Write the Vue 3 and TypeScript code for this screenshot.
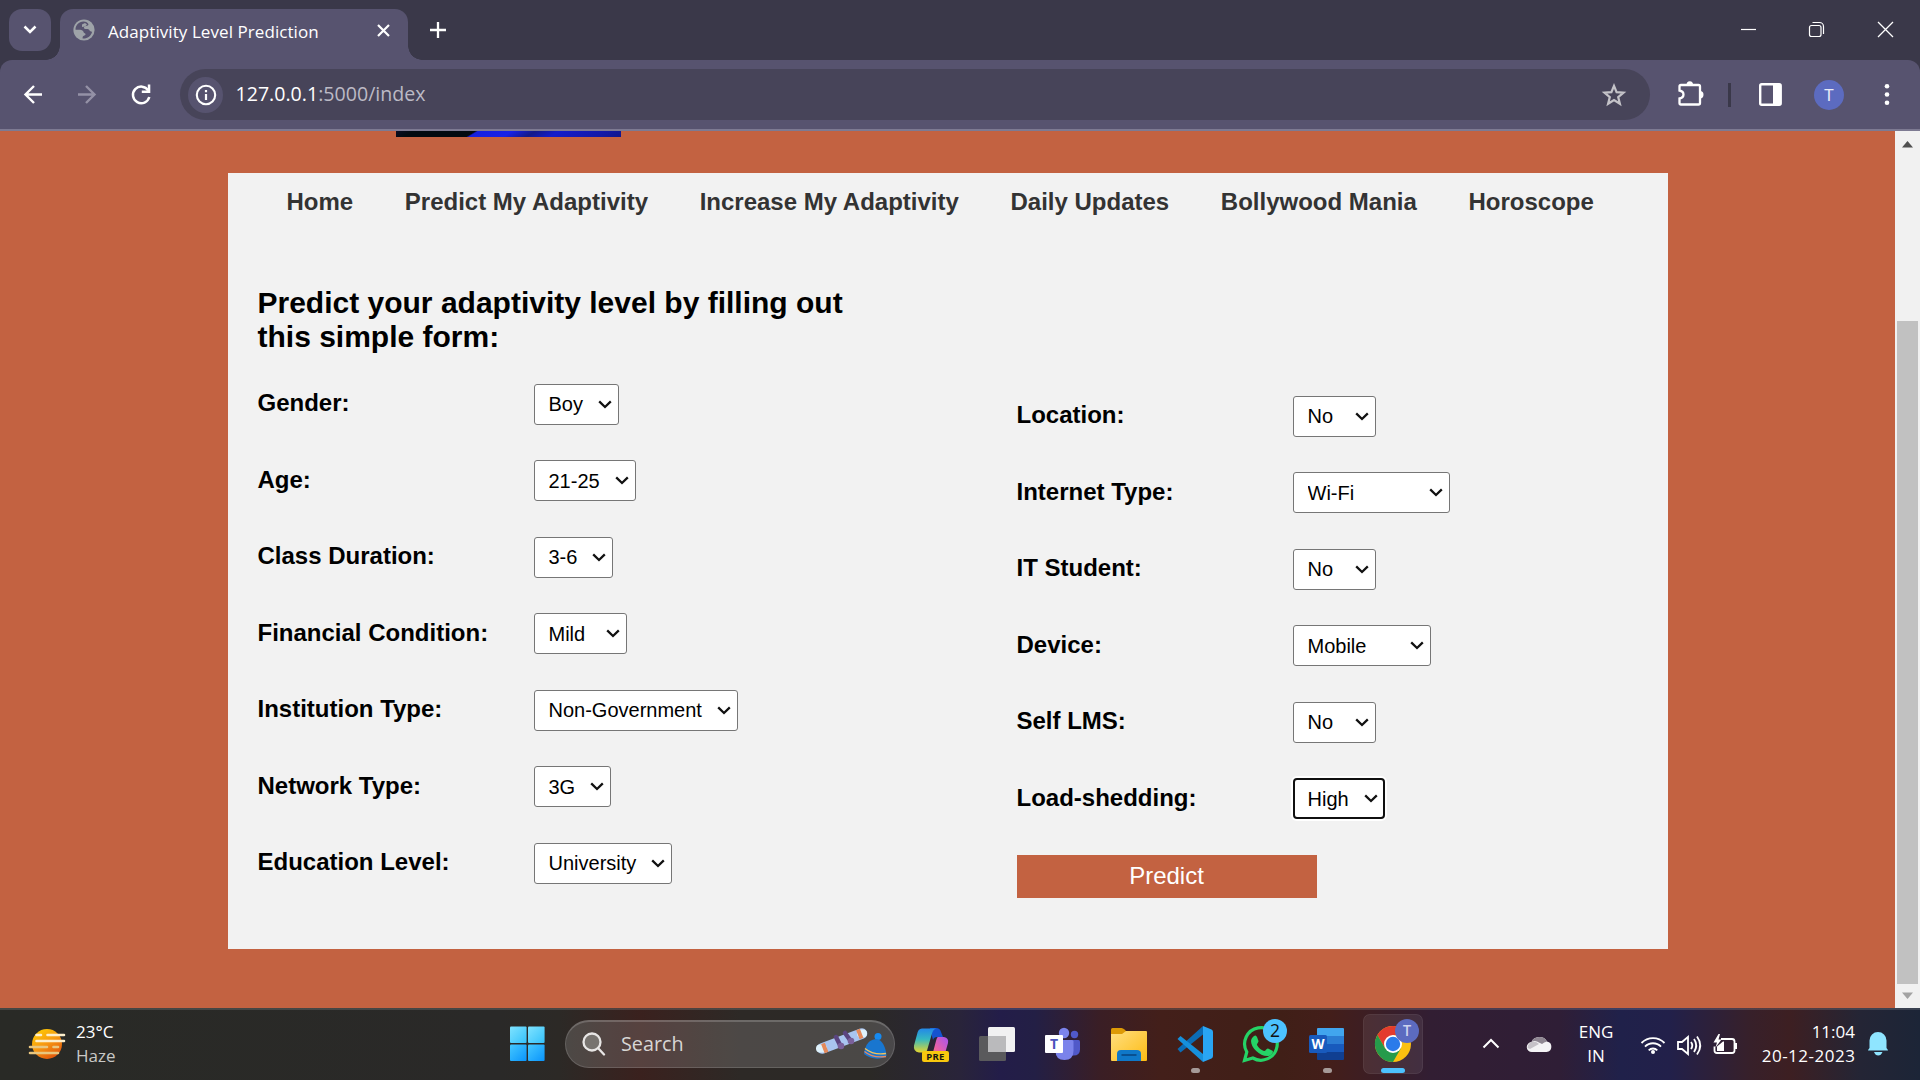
<script setup lang="ts">
interface Field {
  label: string
  value: string
  width: number
  focused?: boolean
}

const navLinks: string[] = [
  'Home',
  'Predict My Adaptivity',
  'Increase My Adaptivity',
  'Daily Updates',
  'Bollywood Mania',
  'Horoscope',
]

const leftFields: Field[] = [
  { label: 'Gender:', value: 'Boy', width: 85 },
  { label: 'Age:', value: '21-25', width: 102 },
  { label: 'Class Duration:', value: '3-6', width: 79 },
  { label: 'Financial Condition:', value: 'Mild', width: 93 },
  { label: 'Institution Type:', value: 'Non-Government', width: 204 },
  { label: 'Network Type:', value: '3G', width: 77 },
  { label: 'Education Level:', value: 'University', width: 138 },
]

const rightFields: Field[] = [
  { label: 'Location:', value: 'No', width: 83 },
  { label: 'Internet Type:', value: 'Wi-Fi', width: 157 },
  { label: 'IT Student:', value: 'No', width: 83 },
  { label: 'Device:', value: 'Mobile', width: 138 },
  { label: 'Self LMS:', value: 'No', width: 83 },
  { label: 'Load-shedding:', value: 'High', width: 92, focused: true },
]
</script>

<template>
  <div class="desktop">
    <header class="tabstrip">
      <button class="tab-search" aria-label="Search tabs">
        <svg width="14" height="10" viewBox="0 0 14 10"><path d="M1.500 1.500 7 7l5.500-5.500" fill="none" stroke="#fff" stroke-width="2.500" /></svg>
      </button>
      <div class="tab">
        <svg class="globe" width="22" height="22" viewBox="0 0 22 22">
          <circle cx="11" cy="11" r="10.600" fill="#9ea3a8" />
          <path d="M10.500 2.500c-4.800.2-8 3.800-8 8.200 2 .3 4.600-.2 6.500.6 1.800.8 1.200 2.400 2.700 3 .8.3 1 1.200.6 1.700-1.200 1-2.700.6-2.700 2.400v1.100c4.600.4 8.500-2.400 9.500-6.800-2.600.2-2.300-2.500-4.600-2.700-1.900-.2-2.700.6-3.500-.7-.6-1.300.7-2.200 1.900-2.300 1.500-.1 2.600-.4 2.500-1.900C14.900 3.800 13 2.600 10.500 2.500z" fill="#57536f" />
          <path d="M9 5.500 12 4l2 1.500-2 2-3 .5z" fill="#9ea3a8" />
        </svg>
        <span class="tab-title">Adaptivity Level Prediction</span>
        <svg width="13" height="13" viewBox="0 0 13 13"><path d="m1 1 11 11M12 1 1 12" stroke="#fff" stroke-width="2.200" /></svg>
      </div>
      <svg class="plus" width="16" height="16" viewBox="0 0 16 16"><path d="M8 0v16M0 8h16" stroke="#fff" stroke-width="2.300" /></svg>
      <div class="window-buttons">
        <svg width="69" height="60" viewBox="1714 0 69 60"><path d="M1741 29.500h15" stroke="#fff" stroke-width="1.200" /></svg>
        <svg width="69" height="60" viewBox="1783 0 69 60" fill="none" stroke="#fff" stroke-width="1.200">
          <rect x="1809.500" y="25.500" width="11.500" height="11" rx="2" />
          <path d="M1812.500 22.500h7a4 4 0 0 1 4 4v7.500" />
        </svg>
        <svg width="68" height="60" viewBox="1852 0 68 60"><path d="m1878 22 15 15m0-15-15 15" stroke="#fff" stroke-width="1.300" /></svg>
      </div>
    </header>

    <div class="toolbar-back">
      <div class="toolbar">
        <svg width="180" height="69" viewBox="0 60 180 69" fill="none">
          <path d="M42 94.500H26.500M34 86l-8.500 8.500L34 103" stroke="#fff" stroke-width="2.400" />
          <path d="M78 94.500h15.500M86 86l8.500 8.500L86 103" stroke="#9491a6" stroke-width="2.400" />
          <path d="M148.300 90.500a8.300 8.300 0 1 0 1 6.500" stroke="#fff" stroke-width="2.500" />
          <path d="M150.300 84.500v8.500h-8.500v-2.500h6v-6z" fill="#fff" />
        </svg>
        <div class="omnibox">
          <div class="site-info">
            <svg width="22" height="22" viewBox="0 0 22 22">
              <circle cx="11" cy="11" r="9.200" fill="none" stroke="#fff" stroke-width="2.100" />
              <path d="M11 10v6M11 5.900v2.300" stroke="#fff" stroke-width="2.200" />
            </svg>
          </div>
          <span class="url">127.0.0.1<span class="url-rest">:5000/index</span></span>
          <svg width="26" height="26" viewBox="1601 81 26 26"><path d="m1614 84.800 2.600 6.400 6.900.5-5.300 4.400 1.700 6.700-5.900-3.700-5.900 3.700 1.700-6.700-5.300-4.400 6.900-.5z" fill="none" stroke="#c4c3c8" stroke-width="2.200" /></svg>
        </div>
        <svg class="toolbar-actions" width="270" height="69" viewBox="1650 60 270 69">
          <path d="M1681 85h17.500q1.500 0 1.500 1.500v16.500q0 1.500-1.500 1.500h-17.500q-1.500 0-1.500-1.500v-4.500c5.300-1 5.300-7 0-8v-4q0-1.500 1.500-1.500z" fill="none" stroke="#fff" stroke-width="2.300" />
          <path d="M1686.500 85a3.300 3.800 0 0 1 6.600 0zM1700 91a3.500 3.700 0 0 1 0 7.400z" fill="#fff" />
          <path d="M1729.500 83v24" stroke="#3a3849" stroke-width="3" />
          <rect x="1760.200" y="84.300" width="20.500" height="20.500" rx="1.500" fill="none" stroke="#fff" stroke-width="2.400" />
          <path d="M1773 84h8v21h-8z" fill="#fff" />
          <circle cx="1829" cy="95" r="15" fill="#5c6bc0" />
          <text x="1829" y="101" text-anchor="middle" font-size="16.500" font-family="Roboto, sans-serif" fill="#e9ebf8">T</text>
          <g fill="#fff"><circle cx="1887" cy="86.300" r="2.300" /><circle cx="1887" cy="94.500" r="2.300" /><circle cx="1887" cy="102.800" r="2.300" /></g>
        </svg>
      </div>
    </div>

    <div class="viewport">
      <main class="page">
        <div class="banner"></div>
        <div class="container">
          <nav class="nav">
            <a v-for="link in navLinks" :key="link">{{ link }}</a>
          </nav>
          <form class="form" @submit.prevent>
            <section class="column">
              <h2>Predict your adaptivity level by filling out this simple form:</h2>
              <div v-for="field in leftFields" :key="field.label" class="row">
                <label>{{ field.label }}</label>
                <span class="select" :style="{ width: field.width + 'px' }">
                  <select><option>{{ field.value }}</option></select>
                  <svg width="14" height="9" viewBox="0 0 14 9"><path d="m1.200 1.400 5.800 5.600 5.800-5.600" fill="none" stroke="#111" stroke-width="2.300" /></svg>
                </span>
              </div>
            </section>
            <section class="column right">
              <div v-for="field in rightFields" :key="field.label" class="row">
                <label>{{ field.label }}</label>
                <span class="select" :class="{ focused: field.focused }" :style="{ width: field.width + 'px' }">
                  <select><option>{{ field.value }}</option></select>
                  <svg width="14" height="9" viewBox="0 0 14 9"><path d="m1.200 1.400 5.800 5.600 5.800-5.600" fill="none" stroke="#111" stroke-width="2.300" /></svg>
                </span>
              </div>
              <button class="predict">Predict</button>
            </section>
          </form>
        </div>
      </main>
      <div class="scrollbar">
        <svg width="25" height="25" viewBox="0 0 25 25"><path d="M7 16.500 12.500 10l5.500 6.500z" fill="#505050" /></svg>
        <div class="thumb"></div>
        <svg width="25" height="24" viewBox="0 1 25 24"><path d="M7 9.500h11L12.500 16z" fill="#a3a3a3" /></svg>
      </div>
    </div>

    <footer class="taskbar">
      <div class="weather">
        <svg width="38" height="34" viewBox="28 1026 38 34">
          <defs><linearGradient id="sun" x1="0" y1="0" x2=".6" y2="1"><stop offset="0" stop-color="#ffd400" /><stop offset=".55" stop-color="#f79a12" /><stop offset="1" stop-color="#e35a0c" /></linearGradient></defs>
          <circle cx="47" cy="1043" r="15" fill="url(#sun)" />
          <g stroke-width="2.600" stroke-linecap="round">
            <path d="M36.500 1034h4.500M47.500 1034H64M36.500 1040H64" stroke="#fdeecb" />
            <path d="M30 1046h17M53.500 1046h4.500M30 1052h28" stroke="#e9c67e" />
          </g>
        </svg>
        <div class="weather-text"><span>23°C</span><span class="dim">Haze</span></div>
      </div>
      <svg class="start" width="36" height="36" viewBox="0 0 36 36">
        <defs>
          <linearGradient id="win" x1="0" y1="0" x2="1" y2="1"><stop offset="0" stop-color="#7fe3ff" /><stop offset="1" stop-color="#35c1fb" /></linearGradient>
          <linearGradient id="win2" x1="0" y1="0" x2="1" y2="1"><stop offset="0" stop-color="#45c8ff" /><stop offset="1" stop-color="#0a94fb" /></linearGradient>
        </defs>
        <rect x="0" y="0.500" width="16.600" height="16.600" rx="1" fill="url(#win)" /><rect x="18" y="0.500" width="16.600" height="16.600" rx="1" fill="url(#win)" />
        <rect x="0" y="18.400" width="16.600" height="16.600" rx="1" fill="url(#win2)" /><rect x="18" y="18.400" width="16.600" height="16.600" rx="1" fill="url(#win2)" />
      </svg>
      <div class="search">
        <svg width="24" height="24" viewBox="0 0 24 24" fill="none" stroke="#e8e6e5" stroke-width="2.300"><circle cx="10" cy="10" r="8.500" fill="#77736f" /><path d="m16 16 6 6.500" stroke-linecap="round" /></svg>
        <span>Search</span>
        <svg class="doodle" width="72" height="34" viewBox="815 1029 72 34">
          <path d="M822 1050.500 862 1035.500" stroke="#a9c5f0" stroke-width="10.500" stroke-linecap="round" />
          <path d="M820 1050.500h3M861 1035.500h2" stroke="#dff2fb" stroke-width="8" stroke-linecap="round" />
          <path d="m823 1045.500 3.500 9M858 1031.500l3.500 9" stroke="#e4895a" stroke-width="4" />
          <path d="m836 1039 4 8M845 1035l5 7" stroke="#5b4580" stroke-width="4.500" stroke-linecap="round" />
          <circle cx="841" cy="1048" r="3.300" fill="#7a609a" /><circle cx="851" cy="1043" r="3.300" fill="#7a609a" />
          <circle cx="878" cy="1038.500" r="3.500" fill="#168af0" />
          <path d="M864 1056c1-10 6-15 13-15 5 1 9 8 9.500 17-7 4.500-16 3-22.500-2z" fill="#1976cf" />
          <path d="M865 1050.500c6 5 14 6 21 5" fill="none" stroke="#f2c35c" stroke-width="1.300" />
          <path d="M864.500 1053.500c6 5 14 6 21.500 5" fill="none" stroke="#e78b60" stroke-width="1.300" />
        </svg>
      </div>

      <svg class="app" viewBox="898 1008 66 72">
        <defs>
          <linearGradient id="cpA" x1="0" y1="0" x2="0" y2="1"><stop offset="0" stop-color="#2388e8" /><stop offset=".45" stop-color="#35b8c0" /><stop offset="1" stop-color="#e7d52d" /></linearGradient>
          <linearGradient id="cpB" x1="1" y1="0" x2="0" y2="1"><stop offset="0" stop-color="#a455f0" /><stop offset=".5" stop-color="#e760a8" /><stop offset="1" stop-color="#ff8a50" /></linearGradient>
        </defs>
        <path d="M930 1028h6q4 0 5 4l2 5h-6q-3 0-4 3z" fill="#1553d0" />
        <path d="M922 1028.500h14q-3 1-4 5l-5 17q-1 2-3 2h-5q-6-1-5-7l3-11q1-6 5-6z" fill="url(#cpA)" />
        <path d="M938 1037h6q5 1 4 6l-4 14q-2 4-6 4h-10q3-1 4-5l4-15q1-4 2-4z" fill="url(#cpB)" />
        <rect x="922" y="1051" width="27" height="11" rx="2" fill="#f9c80e" />
        <text x="935.500" y="1060" text-anchor="middle" font-family="Noto Sans, sans-serif" font-weight="700" font-size="9.500" letter-spacing=".4" fill="#1c1a10">PRE</text>
      </svg>
      <svg class="app" viewBox="964 1008 66 72">
        <rect x="979" y="1036" width="27" height="25" rx="1.500" fill="#5a5a5c" />
        <rect x="988" y="1027" width="27" height="25" rx="1.500" fill="#f1f1f2" />
        <rect x="988" y="1036" width="18" height="16" fill="#bababc" />
      </svg>
      <svg class="app" viewBox="1030 1008 66 72">
        <circle cx="1074.500" cy="1034.500" r="3.700" fill="#5059c9" /><circle cx="1064" cy="1033" r="5.200" fill="#7b83eb" />
        <path d="M1068 1040h10.500q1.500 0 1.500 1.500v8q0 6-6.500 6h-5z" fill="#5059c9" />
        <path d="M1056 1040h16q1.500 0 1.500 1.500v9q0 9.500-9 9.500t-9-9z" fill="#7b83eb" />
        <rect x="1045" y="1035" width="18" height="18" rx="1" fill="#fff" />
        <text x="1054" y="1049" text-anchor="middle" font-family="Open Sans, sans-serif" font-weight="700" font-size="14" fill="#4b53bc">T</text>
      </svg>
      <svg class="app" viewBox="1096 1008 66 72">
        <defs><linearGradient id="fold" x1="0" y1="0" x2="1" y2="1"><stop offset="0" stop-color="#ffdf80" /><stop offset="1" stop-color="#fdbb13" /></linearGradient></defs>
        <path d="M1112.500 1028h9q1.500 0 3 1.500l2 2v6H1111v-8q0-1.500 1.500-1.500z" fill="#dd9a06" />
        <path d="M1111 1034h11l4-3h20q1 0 1 1v28q0 1-1 1h-34q-1 0-1-1z" fill="url(#fold)" />
        <path d="M1117 1061v-7q0-4 4-4h16q4 0 4 4v7z" fill="#0f78c8" /><path d="M1121.500 1055h15" stroke="#0a4c8a" stroke-width="1.800" />
      </svg>
      <svg class="app" viewBox="1162 1008 66 72">
        <path d="m1177.500 1049 3 3.500 22.500-18v-8.500z" fill="#0b6cb5" />
        <path d="m1177.500 1039 3-3 22.500 18v8z" fill="#1690dc" />
        <path d="m1203 1026 8.500 3.500q1.500.8 1.500 2.500v24q0 1.700-1.500 2.500L1203 1062z" fill="#29a5f3" />
        <rect x="1191" y="1068" width="9" height="5" rx="2.500" fill="#a69a98" />
      </svg>
      <svg class="app" viewBox="1228 1008 66 72">
        <path d="m1244.500 1060.500 2.300-8.500a16.300 16.300 0 1 1 6 6z" fill="none" stroke="#25d366" stroke-width="3.200" />
        <path d="M1253 1037c2-2 3-2 4 0l1.500 4c.3 1-2 3-1.500 4 1.500 3 4 5 7 6 1.500.5 2.500-3 4-2.500l4.500 2.200c1.500 1-1 5-4 5.300-8 1-17.500-8-17.500-15 0-1.500 1-3 2-4z" fill="#25d366" />
        <circle cx="1275" cy="1031" r="12" fill="#4cc2ff" /><text x="1275" y="1037" text-anchor="middle" font-family="Open Sans, sans-serif" font-size="17.500" fill="#111">2</text>
      </svg>
      <svg class="app" viewBox="1294 1008 66 72">
        <path d="M1317 1036v-7q0-1 1-1h25q1 0 1 1v7z" fill="#41a5ee" /><path d="M1317 1036h27v8h-27z" fill="#2b7cd3" /><path d="M1317 1044h27v8h-27z" fill="#185abd" /><path d="M1317 1052h27v7q0 1-1 1h-25q-1 0-1-1z" fill="#103f91" />
        <rect x="1309" y="1035" width="18" height="18" rx="1.500" fill="#185abd" />
        <text x="1318" y="1049" text-anchor="middle" font-family="Open Sans, sans-serif" font-weight="700" font-size="13.500" fill="#fff">W</text>
        <rect x="1323" y="1068" width="9" height="5" rx="2.500" fill="#a69a98" />
      </svg>
      <svg class="app" viewBox="1360 1008 66 72">
        <rect x="1363.500" y="1014.500" width="59" height="59" rx="6" fill="#ffffff14" stroke="#ffffff18" />
        <circle cx="1393" cy="1044" r="18" fill="#fcc010" />
        <path d="M1393 1035h15.700A18 18 0 0 0 1377.400 1035l7.800 13.500z" fill="#e33b2e" />
        <path d="M1377.400 1035a18 18 0 0 0 15.600 27l7.800-13.500h-15.600z" fill="#259b4b" />
        <circle cx="1393" cy="1044" r="9" fill="#fff" /><circle cx="1393" cy="1044" r="7.200" fill="#2a7bea" />
        <circle cx="1407" cy="1031" r="12" fill="#5c6bc0" /><text x="1407" y="1036" text-anchor="middle" font-family="Roboto, sans-serif" font-weight="500" font-size="14" fill="#cdd2ee">T</text>
        <rect x="1381" y="1068" width="24" height="5" rx="2.500" fill="#4cc2ff" />
      </svg>

      <svg class="tray" width="134" height="72" viewBox="1440 1008 134 72">
        <path d="m1483.500 1047.500 7.500-7.500 7.500 7.500" fill="none" stroke="#fff" stroke-width="2" />
        <path d="M1532 1052a5 5 0 0 1-.5-10 8.500 8 0 0 1 15.500-.5 5.300 5.300 0 0 1-.5 10.500z" fill="#f4f3f5" />
        <path d="M1531.500 1042a8.500 8 0 0 1 15.500-.5q-3 .5-5 2.500l-5-2.500q-3-1-5.500.5z" fill="#8f8792" />
        <path d="M1527.500 1048q.5-6 6-6.500 3.500 0 5.500 2.500l-9 5z" fill="#c6c2c8" />
      </svg>
      <div class="lang"><span>ENG</span><span>IN</span></div>
      <svg class="status" width="104" height="24" viewBox="1639 1030 104 24" fill="none" stroke="#fff" stroke-width="1.800">
        <path d="M1641.500 1041a16 16 0 0 1 23 0M1645 1044.700a11 11 0 0 1 16 0M1648.700 1048.300a6 6 0 0 1 8.600 0" /><circle cx="1653" cy="1050" r="2" fill="#fff" stroke="none" />
        <path d="M1678 1040h4l6-5v17l-6-5h-4zM1691 1040q2.500 3.500 0 7M1694 1037q4.500 6.500 0 13M1697 1034.500q6.500 9 0 18" />
        <path d="M1721 1037h11q2.500 0 2.500 2.500v9q0 2.500-2.500 2.500h-15q-2.500 0-2.500-2.500v-4" />
        <path d="M1717 1049v-4.500l6-5h1v9.500zM1718.500 1032l-5 8.500h3.500l-1.500 5 6-8h-3l1.500-5.500zM1735 1041h2v6h-2z" fill="#fff" stroke="none" />
      </svg>
      <div class="clock"><span>11:04</span><span class="date">20-12-2023</span></div>
      <svg class="bell" width="22" height="26" viewBox="1867 1032 22 26">
        <path d="M1868 1051.500q0-1 1.500-2.500v-7.500a8.500 8.500 0 0 1 17 0v7.500q1.500 1.500 1.500 2.500zM1874 1053h8.500q-1.500 3.500-4.300 3.500t-4.200-3.500z" fill="#8fe5ff" />
      </svg>
    </footer>
  </div>
</template>

<style>
body {
  margin: 0;
  overflow: hidden;
}
</style>

<style scoped>
* {
  box-sizing: border-box;
}
svg {
  display: block;
  flex: none;
}
.desktop {
  display: flex;
  flex-direction: column;
  width: 1920px;
  height: 1080px;
  overflow: hidden;
  font-family: 'Liberation Sans', Arial, sans-serif;
}
.tabstrip {
  display: flex;
  height: 60px;
  background: #3a3849;
}
.tab-search {
  display: flex;
  align-items: center;
  justify-content: center;
  width: 42px;
  height: 42px;
  margin: 9px 9px 0;
  padding: 0;
  border: 0;
  border-radius: 13px;
  background: #57536f;
}
.tab {
  position: relative;
  display: flex;
  align-items: center;
  width: 348px;
  height: 51px;
  margin-top: 9px;
  padding: 0 18px 9px 13px;
  border-radius: 13px 13px 0 0;
  background: #57536f;
}
.tab::before,
.tab::after {
  content: '';
  position: absolute;
  bottom: 0;
  width: 14px;
  height: 14px;
}
.tab::before {
  left: -14px;
  background: radial-gradient(circle at 0 0, transparent 13.500px, #57536f 14px);
}
.tab::after {
  right: -14px;
  background: radial-gradient(circle at 100% 0, transparent 13.500px, #57536f 14px);
}
.tab-title {
  flex: 1;
  margin-left: 13px;
  padding-top: 3px;
  color: #fff;
  font: 17px/22px 'Open Sans', sans-serif;
  letter-spacing: 0.070px;
  white-space: nowrap;
}
.plus {
  margin: 22px 0 0 22px;
}
.window-buttons {
  display: flex;
  margin-left: auto;
}
.toolbar-back {
  background: #3a3849;
}
.toolbar {
  display: flex;
  align-items: center;
  height: 71px;
  border-bottom: 2px solid #7d7a92;
  border-radius: 12px 12px 0 0;
  background: #57536f;
}
.omnibox {
  display: flex;
  align-items: center;
  width: 1470px;
  height: 51px;
  padding: 0 23px 0 8px;
  border-radius: 26px;
  background: #474459;
}
.site-info {
  display: flex;
  align-items: center;
  justify-content: center;
  width: 35px;
  height: 36px;
  border-radius: 50%;
  background: #57536f;
}
.url {
  flex: 1;
  margin-left: 12.500px;
  padding-bottom: 1px;
  color: #fff;
  font: 19.600px/26px 'Open Sans', sans-serif;
}
.url-rest {
  color: #bcbac5;
}
.viewport {
  display: flex;
  height: 877px;
}
.page {
  width: 1895px;
  background: #c36241;
}
.banner {
  width: 225px;
  height: 6px;
  margin-left: 396px;
  background: linear-gradient(149deg, #0a0d24 0, #020a10 9px, #020a10 41px, #1520e0 42.500px, #1822e8 60px, #141a88 72px, #141ccc 84px, #1319a8 108px, #11178a);
}
.container {
  width: 1440px;
  height: 776px;
  margin: 36px 0 0 228px;
  background: #f2f2f2;
}
.nav {
  display: flex;
  gap: 51.650px;
  padding: 16px 0 0 58.500px;
  color: #333;
  font-weight: 700;
  font-size: 24px;
  line-height: 26px;
  white-space: nowrap;
}
.form {
  display: flex;
  padding-left: 29.500px;
}
.column {
  flex: none;
  width: 759px;
  padding-top: 71px;
}
.column.right {
  width: 600px;
  padding-top: 180.800px;
}
h2 {
  width: 610px;
  height: 97.800px;
  margin: 0;
  color: #000;
  font-size: 30px;
  line-height: 34px;
}
.row {
  display: flex;
  align-items: flex-start;
  height: 76.500px;
}
label {
  width: 276px;
  padding-top: 6.300px;
  color: #000;
  font-weight: 700;
  font-size: 24px;
  line-height: 26px;
  white-space: nowrap;
}
.select {
  display: flex;
  align-items: center;
  height: 41px;
  padding: 0 6px 0 14px;
  border: 1px solid #767676;
  border-radius: 3px;
  background: #fff;
}
.select select {
  flex: 1;
  min-width: 0;
  margin-bottom: 0.400px;
  padding: 0;
  border: 0;
  outline: 0;
  appearance: none;
  background: none;
  color: #000;
  font: 20px/24px 'Liberation Sans', Arial, sans-serif;
}
.select.focused {
  padding: 0 5px 0 13px;
  border: 2px solid #101010;
  border-radius: 4px;
  box-shadow: 0 0 0 2px #fff;
}
.predict {
  display: block;
  width: 300px;
  height: 43px;
  padding: 0 0 1px;
  border: 0;
  background: #c36241;
  color: #fff;
  font: 24px/42px 'Liberation Sans', Arial, sans-serif;
}
.scrollbar {
  display: flex;
  flex-direction: column;
  align-items: center;
  justify-content: space-between;
  width: 25px;
  background: #f1f1f1;
}
.thumb {
  width: 21px;
  height: 663px;
  margin-top: auto;
  background: #c1c1c1;
}
.taskbar {
  display: flex;
  align-items: center;
  height: 72px;
  background:
    linear-gradient(#ffffff22, #ffffff22) top / 100% 2px no-repeat,
    linear-gradient(90deg, #292a26 0, #2a2928 500px, #2c2926 560px, #3a211e 640px, #2d2926 740px, #2b2926 870px, #29243a 960px, #231d49 1000px, #231f45 1035px, #3a1e25 1100px, #431f1a 1160px, #401f17 1280px, #431e1a 1330px, #321e33 1430px, #2f1e36 1560px, #20214a 1620px, #22204a 1670px, #37202a 1750px, #3d1f22 1790px, #242535 1860px, #1c2537 1920px);
  color: #fff;
  font: 17px/24px 'Open Sans', sans-serif;
}
.weather {
  display: flex;
  align-items: center;
  width: 510px;
  padding-left: 28px;
}
.weather-text {
  display: flex;
  flex-direction: column;
  margin-left: 10px;
}
.dim {
  color: #c8c8c6;
}
.search {
  display: flex;
  align-items: center;
  width: 330px;
  height: 48px;
  margin: 0 3px 0 19px;
  padding: 0 7px 1px 16px;
  border: 1px solid #ffffff24;
  border-top: 2px solid #ffffff30;
  border-radius: 24px;
  background: #ffffff26;
  color: #d8d6d5;
  font-size: 19.800px;
}
.search span {
  margin-left: 15px;
}
.doodle {
  margin-left: auto;
}
.app {
  width: 66px;
  height: 72px;
}
.tray {
  margin-left: 14px;
}
.lang {
  display: flex;
  flex-direction: column;
  align-items: center;
  width: 44px;
}
.status {
  margin-left: 21px;
}
.clock {
  display: flex;
  flex-direction: column;
  align-items: flex-end;
  width: 112px;
  white-space: nowrap;
}
.date {
  margin-right: -0.400px;
  letter-spacing: 0.500px;
}
.bell {
  margin-left: 12px;
}
</style>
